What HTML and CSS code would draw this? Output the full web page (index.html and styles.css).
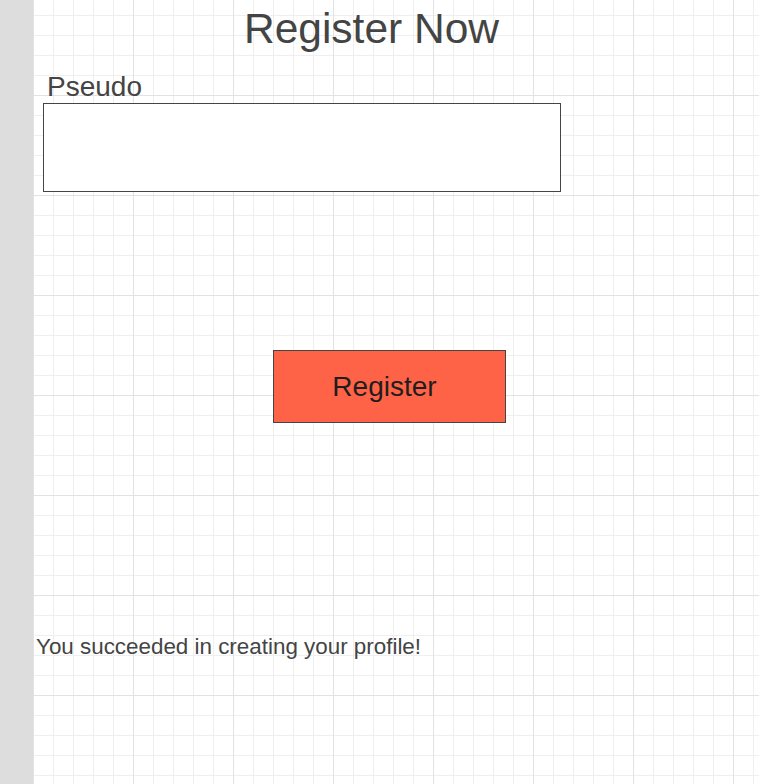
FILE: index.html
```html
<!DOCTYPE html>
<html lang="en">
<head>
<meta charset="utf-8">
<title>Register Now</title>
<link rel="stylesheet" href="styles.css">
</head>
<body>
<div class="page">
  <aside class="sidebar"></aside>
  <main class="board">
    <h1 class="title">Register Now</h1>
    <form class="form" onsubmit="return false">
      <label class="label" for="pseudo">Pseudo</label>
      <input class="field" id="pseudo" type="text">
      <button class="submit" type="submit">Register</button>
    </form>
    <p class="message">You succeeded in creating your profile!</p>
  </main>
</div>
</body>
</html>
```
FILE: styles.css
```css
html, body {
  margin: 0;
  padding: 0;
  height: 100%;
}
body {
  font-family: "Liberation Sans", Arial, sans-serif;
  color: #444;
  background: #fff;
}
.page {
  display: flex;
  min-height: 100%;
}
.sidebar {
  width: 33px;
  flex: none;
  background: #dddddd;
}
.board {
  flex: 1;
  display: flex;
  flex-direction: column;
  align-items: flex-start;
  background-color: #fff;
  background-image:
    linear-gradient(to right, #e2e2e2 1px, transparent 1px),
    linear-gradient(to bottom, #e2e2e2 1px, transparent 1px),
    linear-gradient(to right, #efefef 1px, transparent 1px),
    linear-gradient(to bottom, #efefef 1px, transparent 1px);
  background-size: 100px 100px, 100px 100px, 20px 20px, 20px 20px;
  background-position: 0 -5px, 0 -5px, 0 -5px, 0 -5px;
}
.title {
  margin: 5px 0 0 0;
  width: 677px;
  text-align: center;
  font-size: 42.5px;
  line-height: 48px;
  font-weight: normal;
  color: #444;
}
.form {
  display: flex;
  flex-direction: column;
  align-items: flex-start;
  margin: 0;
}
.label {
  margin: 18px 0 0 14px;
  font-size: 28px;
  line-height: 32px;
  color: #444;
}
.field {
  box-sizing: border-box;
  margin: 0 0 0 10px;
  width: 518px;
  height: 89px;
  border: 1px solid #444;
  background: #fff;
  padding: 0 8px;
  font: inherit;
  font-size: 22px;
  outline: none;
}
.submit {
  box-sizing: border-box;
  margin: 158px 0 0 240px;
  width: 233px;
  height: 73px;
  padding: 0 10px 0 0;
  border: 1px solid #444;
  border-radius: 0;
  background: #ff6347;
  color: #1e1e1e;
  font-family: "Liberation Sans", Arial, sans-serif;
  font-size: 28px;
  cursor: pointer;
}
.message {
  margin: 211px 0 0 3px;
  font-size: 22.4px;
  line-height: 26px;
  color: #444;
}
```
